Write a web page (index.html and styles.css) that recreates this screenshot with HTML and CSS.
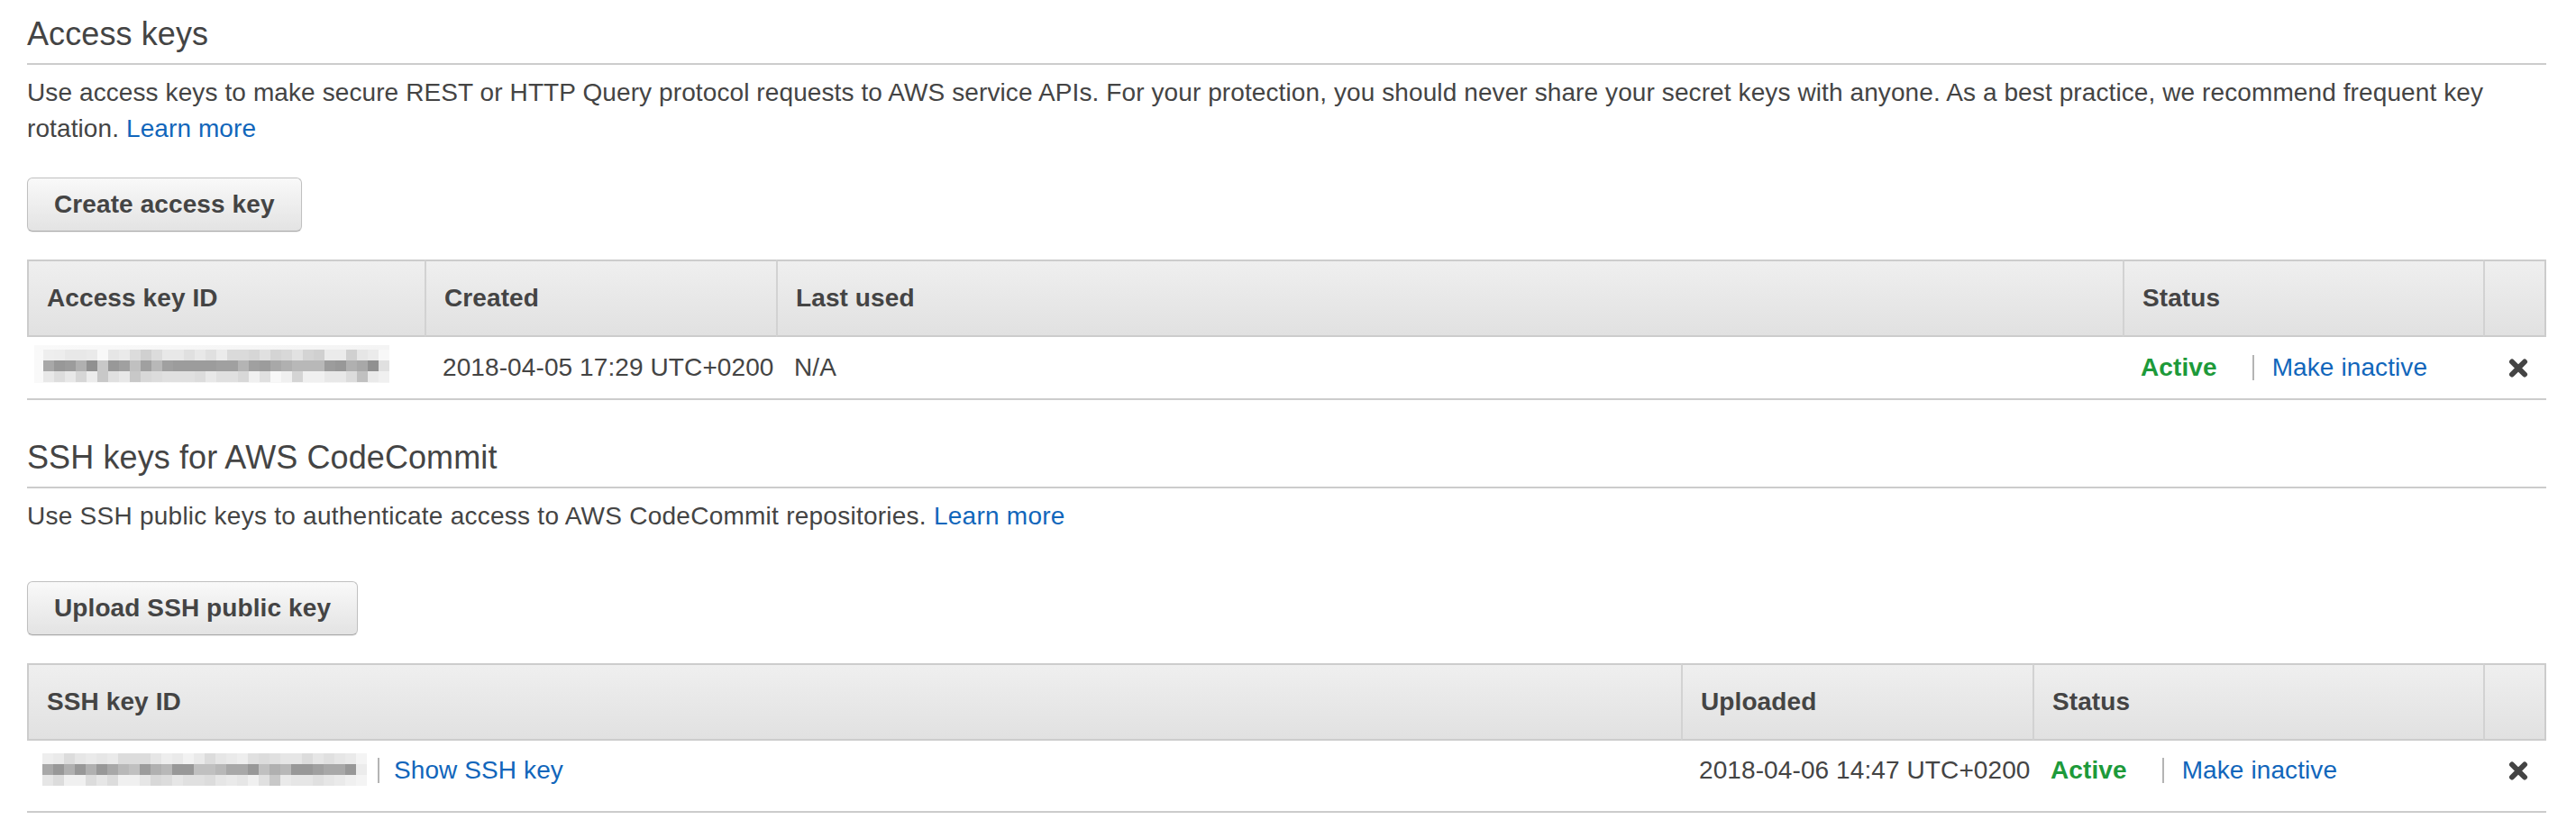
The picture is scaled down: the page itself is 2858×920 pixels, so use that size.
FILE: index.html
```html
<!DOCTYPE html>
<html lang="en">
<head>
<meta charset="utf-8">
<title>Security credentials</title>
<link rel="stylesheet" href="styles.css">
</head>
<body>
<div class="page">
  <section class="section">
    <h2 class="title">Access keys</h2>
    <p class="desc">Use access keys to make secure REST or HTTP Query protocol requests to AWS service APIs. For your protection, you should never share your secret keys with anyone. As a best practice, we recommend frequent key rotation. <a class="link" href="#">Learn more</a></p>
    <button class="btn btn-a" type="button">Create access key</button>
    <div class="grid grid-access">
      <div class="th th-first">Access key ID</div>
      <div class="th">Created</div>
      <div class="th">Last used</div>
      <div class="th">Status</div>
      <div class="th th-last"></div>
      <div class="td td-key1">
        <div class="blur blur-a">
          <div class="brow a1"></div>
          <div class="brow a2"></div>
          <div class="brow a3"></div>
        </div>
      </div>
      <div class="td">2018-04-05 17:29 UTC+0200</div>
      <div class="td">N/A</div>
      <div class="td"><span class="active">Active</span><span class="sep sep-status"></span><a class="link" href="#">Make inactive</a></div>
      <div class="td td-x"><svg class="xicon" width="22" height="21" viewBox="0 0 22 21"><path d="M4 3.5 L18 17.5 M18 3.5 L4 17.5" stroke="#444" stroke-width="6" stroke-linecap="round" fill="none"/></svg></div>
    </div>
  </section>

  <section class="section section-ssh">
    <h2 class="title">SSH keys for AWS CodeCommit</h2>
    <p class="desc">Use SSH public keys to authenticate access to AWS CodeCommit repositories. <a class="link" href="#">Learn more</a></p>
    <button class="btn btn-b" type="button">Upload SSH public key</button>
    <div class="grid grid-ssh">
      <div class="th th-first">SSH key ID</div>
      <div class="th">Uploaded</div>
      <div class="th">Status</div>
      <div class="th th-last"></div>
      <div class="td td-tall td-key2">
        <div class="blur blur-b">
          <div class="brow b1"></div>
          <div class="brow b2"></div>
          <div class="brow b3"></div>
        </div>
        <span class="sep sep-key"></span><a class="link" href="#">Show SSH key</a>
      </div>
      <div class="td td-tall">2018-04-06 14:47 UTC+0200</div>
      <div class="td td-tall"><span class="active">Active</span><span class="sep sep-status"></span><a class="link" href="#">Make inactive</a></div>
      <div class="td td-tall td-x"><svg class="xicon" width="22" height="21" viewBox="0 0 22 21"><path d="M4 3.5 L18 17.5 M18 3.5 L4 17.5" stroke="#444" stroke-width="6" stroke-linecap="round" fill="none"/></svg></div>
    </div>
  </section>
</div>
</body>
</html>
```

FILE: styles.css
```css
html, body {
  margin: 0;
  padding: 0;
  background: #ffffff;
}

body {
  font-family: "Liberation Sans", Arial, Helvetica, sans-serif;
  font-size: 28px;
  line-height: 40px;
  color: #444444;
  letter-spacing: 0.1px;
}

.page {
  padding: 0 33px 0 30px;
}

.title {
  margin: 0;
  padding: 18px 0 12px;
  font-size: 36px;
  line-height: 40px;
  font-weight: normal;
  color: #444444;
  border-bottom: 2px solid #cccccc;
}

.section-ssh .title {
  margin-top: 26px;
}

.desc {
  margin: 11px 0 0;
}

.section-ssh .desc {
  letter-spacing: 0.25px;
}

.link {
  color: #1166bb;
  text-decoration: none;
}

.btn {
  display: block;
  box-sizing: border-box;
  height: 60px;
  padding: 9px 29px;
  font-family: "Liberation Sans", Arial, Helvetica, sans-serif;
  font-size: 28px;
  line-height: 40px;
  font-weight: bold;
  letter-spacing: 0.1px;
  color: #444444;
  background: linear-gradient(#f9f9f9, #e3e3e3);
  border: 1px solid #c0c0c0;
  border-bottom-color: #a8a8a8;
  border-radius: 6px;
  box-shadow: 0 1px 1px rgba(0, 0, 0, 0.08);
}

.btn-a { margin-top: 34px; }
.btn-b { margin-top: 52px; }

.grid {
  display: grid;
  margin-top: 31px;
}

.grid-access {
  grid-template-columns: 441px 390px 1494px 400px 70px;
}

.grid-ssh {
  grid-template-columns: 1835px 390px 500px 70px;
}

.th {
  box-sizing: border-box;
  height: 86px;
  display: flex;
  align-items: center;
  padding-left: 20px;
  font-weight: bold;
  color: #444444;
  background: linear-gradient(#efefef, #e1e1e1);
  border-top: 2px solid #cccccc;
  border-bottom: 2px solid #cccccc;
  border-left: 2px solid #d2d2d2;
}

.th-first { border-left-color: #cccccc; }
.th-last { border-right: 2px solid #cccccc; }

.td {
  box-sizing: border-box;
  height: 70px;
  display: flex;
  align-items: center;
  padding-left: 20px;
  border-bottom: 2px solid #cccccc;
  white-space: nowrap;
}

.td-tall {
  height: 80px;
  padding-bottom: 12px;
}

.td-key1 { padding-left: 8px; }
.td-key2 { padding-left: 17px; }

.td-x { padding-left: 28px; }

.xicon { display: block; }

.active {
  color: #1d9a3a;
  font-weight: bold;
}

.sep {
  display: inline-block;
  width: 2px;
  height: 28px;
  background: #b4b4b4;
}

.sep-status { margin: 0 20px 0 39px; }
.sep-key { margin: 0 16px 0 12px; }

.blur {
  display: flex;
  flex-direction: column;
}

.blur-a {
  width: 384px;
  padding: 5px 0 1px 10px;
  margin-bottom: 8px;
  background: linear-gradient(90deg, #f9f9f9, #f4f4f4);
}

.blur-b {
  width: 360px;
  margin-bottom: 2px;
}

.brow { height: 12px; }

.a1 {
  background: linear-gradient(90deg, #eeeeee 0 12px, #ededed 0 24px, #e8e8e8 0 36px, #e8e8e8 0 48px, #eaeaea 0 60px, #f8f8f8 0 72px, #e6e6e6 0 84px, #eaeaea 0 96px, #dcdcdc 0 108px, #d0d0d0 0 120px, #dcdcdc 0 132px, #e8e8e8 0 144px, #e8e8e8 0 156px, #e0e0e0 0 168px, #e8e8e8 0 180px, #e0e0e0 0 192px, #ebebeb 0 204px, #dadada 0 216px, #dadada 0 228px, #d6d6d6 0 240px, #e0e0e0 0 252px, #d4d4d4 0 264px, #d8d8d8 0 276px, #e2e2e2 0 288px, #d4d4d4 0 300px, #d0d0d0 0 312px, #ebebeb 0 324px, #ebebeb 0 336px, #d0d0d0 0 348px, #e6e6e6 0 360px, #ebebeb 0 372px, #f8f8f8 0 384px);
}

.a2 {
  background: linear-gradient(90deg, #a8a8a8 0 12px, #989898 0 24px, #9c9c9c 0 36px, #b0b0b0 0 48px, #909090 0 60px, #c8c8c8 0 72px, #989898 0 84px, #a0a0a0 0 96px, #c0c0c0 0 108px, #a0a0a0 0 120px, #b8b8b8 0 132px, #a0a0a0 0 144px, #9c9c9c 0 156px, #9c9c9c 0 168px, #9c9c9c 0 180px, #9c9c9c 0 192px, #a0a0a0 0 204px, #a0a0a0 0 216px, #b4b4b4 0 228px, #a0a0a0 0 240px, #9c9c9c 0 252px, #a8a8a8 0 264px, #b0b0b0 0 276px, #b8b8b8 0 288px, #b8b8b8 0 300px, #b8b8b8 0 312px, #9c9c9c 0 324px, #989898 0 336px, #b0b0b0 0 348px, #a8a8a8 0 360px, #909090 0 372px, #e0e0e0 0 384px);
}

.a3 {
  background: linear-gradient(90deg, #e8e8e8 0 12px, #dddddd 0 24px, #e8e8e8 0 36px, #d6d6d6 0 48px, #ececec 0 60px, #c8c8c8 0 72px, #e0e0e0 0 84px, #e8e8e8 0 96px, #c8c8c8 0 108px, #d8d8d8 0 120px, #dcdcdc 0 132px, #e0e0e0 0 144px, #e0e0e0 0 156px, #e0e0e0 0 168px, #dcdcdc 0 180px, #e8e8e8 0 192px, #e0e0e0 0 204px, #e0e0e0 0 216px, #d8d8d8 0 228px, #f0f0f0 0 240px, #e0e0e0 0 252px, #f8f8f8 0 264px, #f0f0f0 0 276px, #d4d4d4 0 288px, #f0f0f0 0 300px, #f0f0f0 0 312px, #e8e8e8 0 324px, #e8e8e8 0 336px, #dcdcdc 0 348px, #c0c0c0 0 360px, #eaeaea 0 372px, #f0f0f0 0 384px);
}

.b1 {
  background: linear-gradient(90deg, #eeeeee 0 12px, #eaeaea 0 24px, #dcdcdc 0 36px, #e6e6e6 0 48px, #eaeaea 0 60px, #e6e6e6 0 72px, #eaeaea 0 84px, #dcdcdc 0 96px, #dcdcdc 0 108px, #dcdcdc 0 120px, #e6e6e6 0 132px, #eeeeee 0 144px, #eaeaea 0 156px, #f2f2f2 0 168px, #eaeaea 0 180px, #dcdcdc 0 192px, #e6e6e6 0 204px, #eaeaea 0 216px, #eeeeee 0 228px, #e0e0e0 0 240px, #dcdcdc 0 252px, #e0e0e0 0 264px, #e6e6e6 0 276px, #e6e6e6 0 288px, #dcdcdc 0 300px, #e6e6e6 0 312px, #e0e0e0 0 324px, #e6e6e6 0 336px, #eaeaea 0 348px, #f4f4f4 0 360px);
}

.b2 {
  background: linear-gradient(90deg, #a8a8a8 0 12px, #989898 0 24px, #b0b0b0 0 36px, #989898 0 48px, #b0b0b0 0 60px, #989898 0 72px, #a8a8a8 0 84px, #b8b8b8 0 96px, #c0c0c0 0 108px, #9c9c9c 0 120px, #b0b0b0 0 132px, #b8b8b8 0 144px, #989898 0 156px, #989898 0 168px, #c0c0c0 0 180px, #c0c0c0 0 192px, #b8b8b8 0 204px, #a8a8a8 0 216px, #a8a8a8 0 228px, #989898 0 240px, #c0c0c0 0 252px, #b0b0b0 0 264px, #b8b8b8 0 276px, #989898 0 288px, #989898 0 300px, #a0a0a0 0 312px, #a8a8a8 0 324px, #a8a8a8 0 336px, #989898 0 348px, #ececec 0 360px);
}

.b3 {
  background: linear-gradient(90deg, #e6e6e6 0 12px, #dcdcdc 0 24px, #f0f0f0 0 36px, #f0f0f0 0 48px, #dcdcdc 0 60px, #e6e6e6 0 72px, #dcdcdc 0 84px, #f0f0f0 0 96px, #f0f0f0 0 108px, #e6e6e6 0 120px, #d8d8d8 0 132px, #dcdcdc 0 144px, #e6e6e6 0 156px, #e0e0e0 0 168px, #e0e0e0 0 180px, #dcdcdc 0 192px, #e6e6e6 0 204px, #eaeaea 0 216px, #e6e6e6 0 228px, #f0f0f0 0 240px, #e0e0e0 0 252px, #c8c8c8 0 264px, #eaeaea 0 276px, #e6e6e6 0 288px, #e6e6e6 0 300px, #e0e0e0 0 312px, #e6e6e6 0 324px, #eaeaea 0 336px, #f0f0f0 0 348px, #f4f4f4 0 360px);
}
```
